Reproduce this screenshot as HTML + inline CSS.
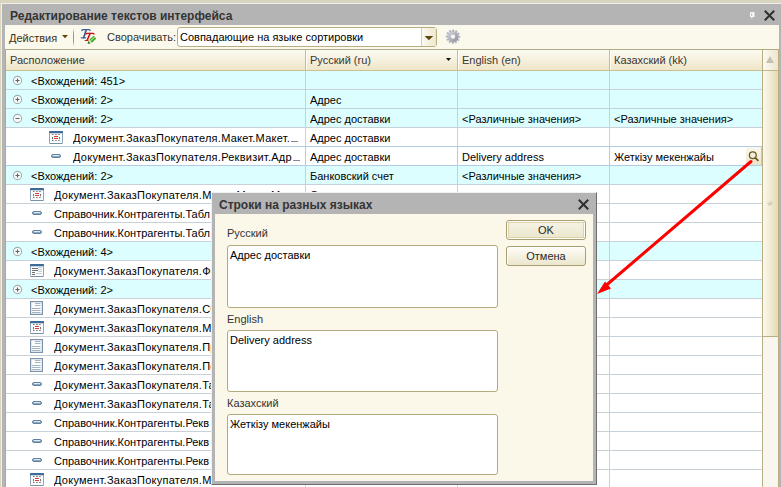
<!DOCTYPE html>
<html><head><meta charset="utf-8"><style>
*{margin:0;padding:0;box-sizing:border-box}
html,body{width:781px;height:487px;overflow:hidden;background:#d9d4bd;font-family:"Liberation Sans", sans-serif;font-size:11px;color:#000}
.abs{position:absolute}
#win{position:absolute;left:1px;top:3px;width:780px;height:484px;background:#b4b4b4;border-left:1px solid #f0f0f0;border-top:1px solid #f0f0f0}
#title{position:absolute;left:10px;top:9px;font-weight:bold;font-size:12px;color:#343434;line-height:15px;white-space:nowrap}
#toolbar{position:absolute;left:5px;top:25px;width:774px;height:24px;background:#fbf9ec}
.tb{position:absolute;white-space:nowrap;line-height:14px}
#grid{position:absolute;left:5px;top:49px;width:774px;height:438px;background:#fff;border:1px solid #b3a982;border-right:none;border-bottom:none}
#hdr{position:absolute;left:6px;top:50px;width:756px;height:21px;background:linear-gradient(#fcfbf3,#efe6c8);border-bottom:1px solid #cbbf94}
.hs{position:absolute;top:50px;width:2px;height:20px;border-left:1px solid #c8bd92;border-right:1px solid #fffef6}
.ht{position:absolute;top:50px;line-height:20px;color:#3a3632;white-space:nowrap}
.row{position:absolute;left:6px;width:756px;height:19px;border-bottom:1px solid #c9d1d8}
.vs{position:absolute;top:71px;width:1px;height:416px;background:#c9d1d8}
.t{position:absolute;line-height:18px;height:18px;padding-top:1px;white-space:nowrap;overflow:hidden}
.ic{position:absolute}
.el{display:inline-block;width:7px;height:1px;background:#8a8a8a;margin-left:1px;vertical-align:baseline}
.edit{position:absolute;left:609px;width:153px;height:20px;border:1px solid #b4cbe6;background:#fff}
.sbtn{position:absolute;left:746px;width:15px;height:18px;background:linear-gradient(#faf8ee,#ece5cc)}
.sbtn svg{position:absolute;left:0;top:0}
#sb{position:absolute;left:762px;top:49px;width:17px;height:438px;background:#f8f6ee;border-left:1px solid #b9ad83;border-right:1px solid #b9ad83;border-top:1px solid #b3a982}
#sbup{position:absolute;left:763px;top:50px;width:15px;height:21px;background:linear-gradient(90deg,#fbfaf2,#ede6cc);border-bottom:1px solid #c2b68b}
#thumb{position:absolute;left:763px;top:71px;width:15px;height:266px;background:linear-gradient(90deg,#fbf9ee,#efe8cc 60%,#e4d9b0);border-bottom:1px solid #b9ad83}
#dlg{position:absolute;left:211px;top:192px;width:386px;height:293px;background:#b4b4b4;border-left:1px solid #f0f0f0;border-top:1px solid #f0f0f0;border-right:1px solid #6e6e6e;border-bottom:1px solid #6e6e6e}
#dbody{position:absolute;left:215px;top:214px;width:378px;height:267px;background:#fbf8e9}
.lbl{position:absolute;left:227px;color:#333;line-height:14px;white-space:nowrap}
.box{position:absolute;left:227px;width:271px;background:#fff;border:1px solid #b3a97d;border-radius:3px}
.boxt{position:absolute;left:230px;line-height:14px;white-space:nowrap;color:#000}
.btn{position:absolute;left:506px;width:80px;height:20px;border:1px solid #a99e72;border-radius:3px;background:linear-gradient(#fefdf8,#ece6cd);box-shadow:inset 1px 1px 0 #fff;text-align:center;line-height:18px;color:#2a2a2a}
.btn.def{background:linear-gradient(#f7f4e6,#ebe5ca);box-shadow:inset 0 0 0 1px #fffef6,inset 0 0 0 2px #dbd3ac}
</style></head><body>
<div id="win"></div>
<div id="title">Редактирование текстов интерфейса</div>
<svg class="abs" style="left:749px;top:11px" width="7" height="9" viewBox="0 0 7 9"><path d="M1 2Q1 1 2 1H4.5Q5.5 1 5.5 2V6H1z" fill="#fafafa"/><rect x="2.1" y="2.2" width="1.1" height="2.7" fill="#bdbdbd"/><rect x="2.2" y="6" width="1.2" height="2" fill="#dcdcdc"/></svg>
<svg class="abs" style="left:763px;top:9px" width="13" height="13" viewBox="0 0 13 13"><path d="M1.8 1.8L11.2 11.2M11.2 1.8L1.8 11.2" stroke="#2f2f2f" stroke-width="2"/></svg>
<div id="toolbar"></div>
<div class="tb" style="left:9px;top:31px;color:#3b3213">Действия</div>
<svg class="abs" style="left:61px;top:35px" width="8" height="4" viewBox="0 0 8 4"><path d="M1 0h6L4 3.2z" fill="#5b4612"/></svg>
<div class="abs" style="left:73px;top:28px;width:1px;height:19px;background:linear-gradient(rgba(160,140,90,0),#a8976a 30%,#a8976a 70%,rgba(160,140,90,0))"></div>
<svg class="abs" style="left:78px;top:26px" width="22" height="20" viewBox="0 0 22 20">
<g fill="none" stroke-linecap="round">
<path d="M3.9 4.6Q4 3.7 5 3.7L11 3.7Q11.9 3.7 12 4.5" stroke="#3f5e9a" stroke-width="1.3"/>
<path d="M8.2 4L5.7 11.5" stroke="#3f5e9a" stroke-width="1.7"/>
<path d="M3.2 11.8L7.6 11.8" stroke="#3f5e9a" stroke-width="1.2"/>
<path d="M8 8.1Q8.2 7.3 9 7.3L15 7.3Q15.8 7.3 16 8.1" stroke="#c81414" stroke-width="1.3"/>
<path d="M12 7.6L9.2 14.2" stroke="#c81414" stroke-width="1.6"/>
<path d="M7.2 14.5L10.2 14.5" stroke="#c81414" stroke-width="1.2"/>
</g>
<g transform="translate(9.6 17.8) rotate(-41.5)">
<path d="M0 0L2.6 -1.9L2.6 1.9z" fill="#2a6a1a"/>
<rect x="2.6" y="-1.9" width="1.1" height="3.8" fill="#eef6e8"/>
<rect x="3.7" y="-1.95" width="6.3" height="3.9" rx="0.6" fill="#46a82a"/>
<rect x="3.9" y="-0.9" width="5.9" height="1.1" fill="#a6e486"/>
</g>
</svg>
<div class="tb" style="left:107px;top:30px;color:#333">Сворачивать:</div>
<div class="abs" style="left:177px;top:27px;width:260px;height:20px;background:#fff;border:1px solid #b8ad80;border-radius:3px"></div>
<div class="abs" style="left:421px;top:28px;width:15px;height:18px;background:linear-gradient(90deg,#fbf9f0,#efe8d0);border-left:1px solid #d8cfae"></div>
<svg class="abs" style="left:424px;top:36px" width="10" height="5" viewBox="0 0 10 5"><path d="M0.6 0h8.6L4.9 4.2z" fill="#5b4612"/></svg>
<div class="tb" style="left:180px;top:30px">Совпадающие на языке сортировки</div>
<svg class="abs" style="left:445px;top:29px" width="16" height="16" viewBox="0 0 16 16">
<defs><linearGradient id="gg" x1="0" y1="0" x2="1" y2="1"><stop offset="0" stop-color="#d8d8e0"/><stop offset="1" stop-color="#8c8c98"/></linearGradient></defs>
<g transform="translate(8 7.7)"><g fill="url(#gg)"><rect x="-1.1" y="-7.3" width="2.2" height="3.5" transform="rotate(0)"/><rect x="-1.1" y="-7.3" width="2.2" height="3.5" transform="rotate(30)"/><rect x="-1.1" y="-7.3" width="2.2" height="3.5" transform="rotate(60)"/><rect x="-1.1" y="-7.3" width="2.2" height="3.5" transform="rotate(90)"/><rect x="-1.1" y="-7.3" width="2.2" height="3.5" transform="rotate(120)"/><rect x="-1.1" y="-7.3" width="2.2" height="3.5" transform="rotate(150)"/><rect x="-1.1" y="-7.3" width="2.2" height="3.5" transform="rotate(180)"/><rect x="-1.1" y="-7.3" width="2.2" height="3.5" transform="rotate(210)"/><rect x="-1.1" y="-7.3" width="2.2" height="3.5" transform="rotate(240)"/><rect x="-1.1" y="-7.3" width="2.2" height="3.5" transform="rotate(270)"/><rect x="-1.1" y="-7.3" width="2.2" height="3.5" transform="rotate(300)"/><rect x="-1.1" y="-7.3" width="2.2" height="3.5" transform="rotate(330)"/></g>
<circle r="5.3" fill="url(#gg)"/><circle r="2.1" fill="#f6f6f2"/></g></svg>
<div id="grid"></div>
<div id="hdr"></div>
<div class="ht" style="left:10px">Расположение</div>
<div class="ht" style="left:310px">Русский (ru)</div>
<svg class="abs" style="left:446px;top:58px" width="5" height="3" viewBox="0 0 5 3"><path d="M0 0h5L2.5 3z" fill="#111"/></svg>
<div class="ht" style="left:462px">English (en)</div>
<div class="ht" style="left:614px">Казахский (kk)</div>
<div class="hs" style="left:305px"></div>
<div class="hs" style="left:457px"></div>
<div class="hs" style="left:609px"></div>
<div class="row" style="top:71px;background:#ddfefe"></div>
<svg class="ic" style="left:12px;top:75px" width="11" height="11" viewBox="0 0 11 11"><circle cx="5.5" cy="5.5" r="4.1" fill="#fdfefe" stroke="#9db0b0" stroke-width="1.1"/><path d="M3.4 5.5h4.2" stroke="#5c6666" stroke-width="1.1"/><path d="M5.5 3.4v4.2" stroke="#5c6666" stroke-width="1.1"/></svg>
<div class="t" style="left:31px;top:71px;width:273px;">&lt;Вхождений: 451&gt;</div>
<div class="row" style="top:90px;background:#ddfefe"></div>
<svg class="ic" style="left:12px;top:94px" width="11" height="11" viewBox="0 0 11 11"><circle cx="5.5" cy="5.5" r="4.1" fill="#fdfefe" stroke="#9db0b0" stroke-width="1.1"/><path d="M3.4 5.5h4.2" stroke="#5c6666" stroke-width="1.1"/><path d="M5.5 3.4v4.2" stroke="#5c6666" stroke-width="1.1"/></svg>
<div class="t" style="left:31px;top:90px;width:273px;">&lt;Вхождений: 2&gt;</div>
<div class="t" style="left:310px;top:90px;width:146px">Адрес</div>
<div class="row" style="top:109px;background:#ddfefe"></div>
<svg class="ic" style="left:12px;top:113px" width="11" height="11" viewBox="0 0 11 11"><circle cx="5.5" cy="5.5" r="4.1" fill="#fdfefe" stroke="#9db0b0" stroke-width="1.1"/><path d="M3.4 5.5h4.2" stroke="#5c6666" stroke-width="1.1"/></svg>
<div class="t" style="left:31px;top:109px;width:273px;">&lt;Вхождений: 2&gt;</div>
<div class="t" style="left:310px;top:109px;width:146px">Адрес доставки</div>
<div class="t" style="left:462px;top:109px;width:146px">&lt;Различные значения&gt;</div>
<div class="t" style="left:614px;top:109px;width:146px">&lt;Различные значения&gt;</div>
<div class="row" style="top:128px;background:#ffffff"></div>
<svg class="ic" style="left:49px;top:131px" width="14" height="13" viewBox="0 0 14 13"><rect x="0.5" y="0.5" width="13" height="12" rx="1" fill="#fbfcfd" stroke="#8ea3b7"/><path d="M0.5 12.5h13" stroke="#7a90a4"/><rect x="0" y="0" width="14" height="2.2" rx="0.8" fill="#3d6a97"/><path d="M3 3.5h1.5M6.2 3.5h1.5M9.2 3.5h1.5M3 9.5h1.5M6.2 9.5h1.5M9.2 9.5h1.5M3.5 6v2.2M10.5 6v2.2" stroke="#747474" stroke-width="1"/><path d="M5 5.5h4M5 7.5h4" stroke="#d8402e" stroke-width="1"/></svg>
<div class="t" style="left:73px;top:128px;width:231px;letter-spacing:0.25px;">Документ.ЗаказПокупателя.Макет.Макет.<i class="el"></i></div>
<div class="t" style="left:310px;top:128px;width:146px">Адрес доставки</div>
<div class="row" style="top:147px;background:#ffffff"></div>
<svg class="ic" style="left:51px;top:154px" width="10" height="4" viewBox="0 0 10 4"><rect x="0.5" y="0.5" width="9" height="3" rx="1.5" fill="#8fa9c0" stroke="#5f809e" stroke-width="1"/><path d="M1.8 1.5h6.4" stroke="#dfeaf3" stroke-width="1"/></svg>
<div class="t" style="left:73px;top:147px;width:231px;letter-spacing:0.25px;">Документ.ЗаказПокупателя.Реквизит.Адр<i class="el"></i></div>
<div class="t" style="left:310px;top:147px;width:146px">Адрес доставки</div>
<div class="t" style="left:462px;top:147px;width:146px">Delivery address</div>
<div class="edit" style="top:146px"></div>
<div class="t" style="left:614px;top:147px;width:130px">Жеткізу мекенжайы</div>
<div class="sbtn" style="top:147px"><svg width="15" height="18" viewBox="0 0 15 18"><circle cx="6.8" cy="8.3" r="3.4" fill="none" stroke="#6b5a1e" stroke-width="1.3"/><path d="M9.3 10.8l2.6 2.6" stroke="#6b5a1e" stroke-width="1.8" stroke-linecap="round"/></svg></div>
<div class="row" style="top:166px;background:#ddfefe"></div>
<svg class="ic" style="left:12px;top:170px" width="11" height="11" viewBox="0 0 11 11"><circle cx="5.5" cy="5.5" r="4.1" fill="#fdfefe" stroke="#9db0b0" stroke-width="1.1"/><path d="M3.4 5.5h4.2" stroke="#5c6666" stroke-width="1.1"/><path d="M5.5 3.4v4.2" stroke="#5c6666" stroke-width="1.1"/></svg>
<div class="t" style="left:31px;top:166px;width:273px;">&lt;Вхождений: 2&gt;</div>
<div class="t" style="left:310px;top:166px;width:146px">Банковский счет</div>
<div class="t" style="left:462px;top:166px;width:146px">&lt;Различные значения&gt;</div>
<div class="row" style="top:185px;background:#ffffff"></div>
<svg class="ic" style="left:30px;top:188px" width="14" height="13" viewBox="0 0 14 13"><rect x="0.5" y="0.5" width="13" height="12" rx="1" fill="#fbfcfd" stroke="#8ea3b7"/><path d="M0.5 12.5h13" stroke="#7a90a4"/><rect x="0" y="0" width="14" height="2.2" rx="0.8" fill="#3d6a97"/><path d="M3 3.5h1.5M6.2 3.5h1.5M9.2 3.5h1.5M3 9.5h1.5M6.2 9.5h1.5M9.2 9.5h1.5M3.5 6v2.2M10.5 6v2.2" stroke="#747474" stroke-width="1"/><path d="M5 5.5h4M5 7.5h4" stroke="#d8402e" stroke-width="1"/></svg>
<div class="t" style="left:54px;top:185px;width:250px;letter-spacing:0.25px;">Документ.ЗаказПокупателя.Макет.Макет.Макет</div>
<div class="t" style="left:310px;top:185px;width:146px">Склад</div>
<div class="row" style="top:204px;background:#ffffff"></div>
<svg class="ic" style="left:32px;top:211px" width="10" height="4" viewBox="0 0 10 4"><rect x="0.5" y="0.5" width="9" height="3" rx="1.5" fill="#8fa9c0" stroke="#5f809e" stroke-width="1"/><path d="M1.8 1.5h6.4" stroke="#dfeaf3" stroke-width="1"/></svg>
<div class="t" style="left:54px;top:204px;width:250px;">Справочник.Контрагенты.Табл</div>
<div class="row" style="top:223px;background:#ffffff"></div>
<svg class="ic" style="left:32px;top:230px" width="10" height="4" viewBox="0 0 10 4"><rect x="0.5" y="0.5" width="9" height="3" rx="1.5" fill="#8fa9c0" stroke="#5f809e" stroke-width="1"/><path d="M1.8 1.5h6.4" stroke="#dfeaf3" stroke-width="1"/></svg>
<div class="t" style="left:54px;top:223px;width:250px;">Справочник.Контрагенты.Табл</div>
<div class="row" style="top:242px;background:#ddfefe"></div>
<svg class="ic" style="left:12px;top:246px" width="11" height="11" viewBox="0 0 11 11"><circle cx="5.5" cy="5.5" r="4.1" fill="#fdfefe" stroke="#9db0b0" stroke-width="1.1"/><path d="M3.4 5.5h4.2" stroke="#5c6666" stroke-width="1.1"/><path d="M5.5 3.4v4.2" stroke="#5c6666" stroke-width="1.1"/></svg>
<div class="t" style="left:31px;top:242px;width:273px;">&lt;Вхождений: 4&gt;</div>
<div class="row" style="top:261px;background:#ffffff"></div>
<svg class="ic" style="left:30px;top:264px" width="14" height="13" viewBox="0 0 14 13"><rect x="0.5" y="0.5" width="13" height="12" rx="1" fill="#fbfcfd" stroke="#8ea3b7"/><path d="M0.5 12.5h13" stroke="#7a90a4"/><rect x="0" y="0" width="14" height="2.2" rx="0.8" fill="#3d6a97"/><path d="M2 4.5h6M2 6.5h6M2 8.5h3M2 10.5h3" stroke="#6e6e6e" stroke-width="1"/><path d="M8 3.5h4M8 5.5h4M8 7.5h4M6 9.5h6" stroke="#c4ccd4" stroke-width="1"/></svg>
<div class="t" style="left:54px;top:261px;width:250px;letter-spacing:0.25px;">Документ.ЗаказПокупателя.Форма</div>
<div class="row" style="top:280px;background:#ddfefe"></div>
<svg class="ic" style="left:12px;top:284px" width="11" height="11" viewBox="0 0 11 11"><circle cx="5.5" cy="5.5" r="4.1" fill="#fdfefe" stroke="#9db0b0" stroke-width="1.1"/><path d="M3.4 5.5h4.2" stroke="#5c6666" stroke-width="1.1"/><path d="M5.5 3.4v4.2" stroke="#5c6666" stroke-width="1.1"/></svg>
<div class="t" style="left:31px;top:280px;width:273px;">&lt;Вхождений: 2&gt;</div>
<div class="row" style="top:299px;background:#ffffff"></div>
<svg class="ic" style="left:30px;top:301px" width="13" height="14" viewBox="0 0 13 14"><rect x="0.6" y="0.6" width="11.8" height="12.8" fill="#fbfcfe" stroke="#7d93a8" stroke-width="1.2"/><path d="M5 2.5h5.5M5 4.5h5.5" stroke="#a3b4c4" stroke-width="1"/><path d="M2 7.5h8.5M2 9.5h8.5M2 11.5h8.5" stroke="#a3b4c4" stroke-width="1"/></svg>
<div class="t" style="left:54px;top:299px;width:250px;letter-spacing:0.25px;">Документ.ЗаказПокупателя.Счет</div>
<div class="row" style="top:318px;background:#ffffff"></div>
<svg class="ic" style="left:30px;top:321px" width="14" height="13" viewBox="0 0 14 13"><rect x="0.5" y="0.5" width="13" height="12" rx="1" fill="#fbfcfd" stroke="#8ea3b7"/><path d="M0.5 12.5h13" stroke="#7a90a4"/><rect x="0" y="0" width="14" height="2.2" rx="0.8" fill="#3d6a97"/><path d="M3 3.5h1.5M6.2 3.5h1.5M9.2 3.5h1.5M3 9.5h1.5M6.2 9.5h1.5M9.2 9.5h1.5M3.5 6v2.2M10.5 6v2.2" stroke="#747474" stroke-width="1"/><path d="M5 5.5h4M5 7.5h4" stroke="#d8402e" stroke-width="1"/></svg>
<div class="t" style="left:54px;top:318px;width:250px;letter-spacing:0.25px;">Документ.ЗаказПокупателя.Макет</div>
<div class="row" style="top:337px;background:#ffffff"></div>
<svg class="ic" style="left:30px;top:339px" width="13" height="14" viewBox="0 0 13 14"><rect x="0.6" y="0.6" width="11.8" height="12.8" fill="#fbfcfe" stroke="#7d93a8" stroke-width="1.2"/><path d="M5 2.5h5.5M5 4.5h5.5" stroke="#a3b4c4" stroke-width="1"/><path d="M2 7.5h8.5M2 9.5h8.5M2 11.5h8.5" stroke="#a3b4c4" stroke-width="1"/></svg>
<div class="t" style="left:54px;top:337px;width:250px;letter-spacing:0.25px;">Документ.ЗаказПокупателя.Приход</div>
<div class="row" style="top:356px;background:#ffffff"></div>
<svg class="ic" style="left:30px;top:358px" width="13" height="14" viewBox="0 0 13 14"><rect x="0.6" y="0.6" width="11.8" height="12.8" fill="#fbfcfe" stroke="#7d93a8" stroke-width="1.2"/><path d="M5 2.5h5.5M5 4.5h5.5" stroke="#a3b4c4" stroke-width="1"/><path d="M2 7.5h8.5M2 9.5h8.5M2 11.5h8.5" stroke="#a3b4c4" stroke-width="1"/></svg>
<div class="t" style="left:54px;top:356px;width:250px;letter-spacing:0.25px;">Документ.ЗаказПокупателя.Подбор</div>
<div class="row" style="top:375px;background:#ffffff"></div>
<svg class="ic" style="left:32px;top:382px" width="10" height="4" viewBox="0 0 10 4"><rect x="0.5" y="0.5" width="9" height="3" rx="1.5" fill="#8fa9c0" stroke="#5f809e" stroke-width="1"/><path d="M1.8 1.5h6.4" stroke="#dfeaf3" stroke-width="1"/></svg>
<div class="t" style="left:54px;top:375px;width:250px;letter-spacing:0.25px;">Документ.ЗаказПокупателя.Табл</div>
<div class="row" style="top:394px;background:#ffffff"></div>
<svg class="ic" style="left:32px;top:401px" width="10" height="4" viewBox="0 0 10 4"><rect x="0.5" y="0.5" width="9" height="3" rx="1.5" fill="#8fa9c0" stroke="#5f809e" stroke-width="1"/><path d="M1.8 1.5h6.4" stroke="#dfeaf3" stroke-width="1"/></svg>
<div class="t" style="left:54px;top:394px;width:250px;letter-spacing:0.25px;">Документ.ЗаказПокупателя.Табл</div>
<div class="row" style="top:413px;background:#ffffff"></div>
<svg class="ic" style="left:32px;top:420px" width="10" height="4" viewBox="0 0 10 4"><rect x="0.5" y="0.5" width="9" height="3" rx="1.5" fill="#8fa9c0" stroke="#5f809e" stroke-width="1"/><path d="M1.8 1.5h6.4" stroke="#dfeaf3" stroke-width="1"/></svg>
<div class="t" style="left:54px;top:413px;width:250px;">Справочник.Контрагенты.Рекв</div>
<div class="row" style="top:432px;background:#ffffff"></div>
<svg class="ic" style="left:32px;top:439px" width="10" height="4" viewBox="0 0 10 4"><rect x="0.5" y="0.5" width="9" height="3" rx="1.5" fill="#8fa9c0" stroke="#5f809e" stroke-width="1"/><path d="M1.8 1.5h6.4" stroke="#dfeaf3" stroke-width="1"/></svg>
<div class="t" style="left:54px;top:432px;width:250px;">Справочник.Контрагенты.Рекв</div>
<div class="row" style="top:451px;background:#ffffff"></div>
<svg class="ic" style="left:32px;top:458px" width="10" height="4" viewBox="0 0 10 4"><rect x="0.5" y="0.5" width="9" height="3" rx="1.5" fill="#8fa9c0" stroke="#5f809e" stroke-width="1"/><path d="M1.8 1.5h6.4" stroke="#dfeaf3" stroke-width="1"/></svg>
<div class="t" style="left:54px;top:451px;width:250px;">Справочник.Контрагенты.Рекв</div>
<div class="row" style="top:470px;background:#ffffff"></div>
<svg class="ic" style="left:30px;top:473px" width="14" height="13" viewBox="0 0 14 13"><rect x="0.5" y="0.5" width="13" height="12" rx="1" fill="#fbfcfd" stroke="#8ea3b7"/><path d="M0.5 12.5h13" stroke="#7a90a4"/><rect x="0" y="0" width="14" height="2.2" rx="0.8" fill="#3d6a97"/><path d="M3 3.5h1.5M6.2 3.5h1.5M9.2 3.5h1.5M3 9.5h1.5M6.2 9.5h1.5M9.2 9.5h1.5M3.5 6v2.2M10.5 6v2.2" stroke="#747474" stroke-width="1"/><path d="M5 5.5h4M5 7.5h4" stroke="#d8402e" stroke-width="1"/></svg>
<div class="t" style="left:54px;top:470px;width:250px;letter-spacing:0.25px;">Документ.ЗаказПокупателя.Макет</div>
<div class="abs" style="left:6px;top:146px;width:756px;height:1px;background:#b4cbe6"></div>
<div class="abs" style="left:6px;top:165px;width:756px;height:1px;background:#b4cbe6"></div>
<div class="vs" style="left:305px"></div>
<div class="vs" style="left:457px"></div>
<div class="vs" style="left:609px"></div>
<div class="abs" style="left:305px;top:146px;width:1px;height:20px;background:#b4cbe6"></div>
<div class="abs" style="left:457px;top:146px;width:1px;height:20px;background:#b4cbe6"></div>
<div class="abs" style="left:609px;top:146px;width:1px;height:20px;background:#b4cbe6"></div>
<div id="sb"></div>
<div id="sbup"></div>
<svg class="abs" style="left:766px;top:56px" width="8" height="7" viewBox="0 0 8 7"><path d="M4 0L8 7H0z" fill="#c4c1b4"/></svg>
<div id="thumb"></div>
<svg class="abs" style="left:767px;top:200px" width="6" height="6" viewBox="0 0 6 6"><circle cx="3" cy="3" r="2.5" fill="#d8d2bc"/><path d="M1 3a2 2 0 0 1 3-1.7" stroke="#f8f6ec" fill="none"/></svg>
<div id="dlg"></div>
<div class="abs" style="left:219px;top:198px;font-weight:bold;font-size:12px;color:#343434;line-height:15px;white-space:nowrap">Строки на разных языках</div>
<svg class="abs" style="left:577px;top:198px" width="13" height="13" viewBox="0 0 13 13"><path d="M1.8 1.8L11.2 11.2M11.2 1.8L1.8 11.2" stroke="#2f2f2f" stroke-width="2"/></svg>
<div id="dbody"></div>
<div class="lbl" style="top:226px">Русский</div>
<div class="box" style="top:245px;height:63px"></div>
<div class="boxt" style="top:248px">Адрес доставки</div>
<div class="lbl" style="top:312px">English</div>
<div class="box" style="top:330px;height:62px"></div>
<div class="boxt" style="top:333px">Delivery address</div>
<div class="lbl" style="top:396px">Казахский</div>
<div class="box" style="top:414px;height:61px"></div>
<div class="boxt" style="top:417px">Жеткізу мекенжайы</div>
<div class="btn def" style="top:220px">OK</div>
<div class="btn" style="top:246px">Отмена</div>
<svg class="abs" style="left:0;top:0" width="781" height="487" viewBox="0 0 781 487">
<path d="M751 161.5L603 288" stroke="#ff0000" stroke-width="3" stroke-linecap="round"/>
<path d="M597 294L605 281.5L611 288.5z" fill="#ff0000"/>
</svg>
</body></html>
